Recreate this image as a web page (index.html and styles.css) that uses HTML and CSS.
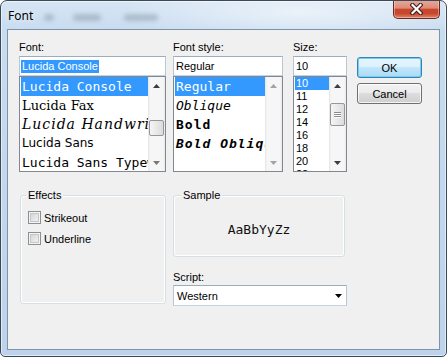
FILE: index.html
```html
<!DOCTYPE html>
<html lang="en">
<head>
  <meta charset="UTF-8">
  <title>Font</title>
  <link rel="stylesheet" href="styles.css">
</head>
<body>
  <div class="window">
    <div class="titlebar">
      <span class="title">Font</span>
      <span class="haze haze-1"></span>
      <span class="haze haze-2"></span>
      <span class="haze haze-3"></span>
      <button class="close-btn" aria-label="Close">
        <svg width="13" height="12" viewBox="0 0 13 12">
          <path d="M2.5 2 10.5 10M10.5 2 2.5 10" stroke="#3a1c15" stroke-width="4.2" stroke-linecap="square"/>
          <path d="M2.5 2 10.5 10M10.5 2 2.5 10" stroke="#fff" stroke-width="2.2" stroke-linecap="square"/>
        </svg>
      </button>
    </div>

    <div class="client">
      <div class="top">
        <div class="col-font">
          <label class="lbl">Font:</label>
          <div class="textbox"><span class="sel-text">Lucida Console</span></div>
          <div class="listbox">
            <ul class="items">
              <li class="selected f-console">Lucida Console</li>
              <li class="f-fax">Lucida Fax</li>
              <li class="f-hand">Lucida Handwriting</li>
              <li class="f-sans">Lucida Sans</li>
              <li class="f-console">Lucida Sans Typewriter</li>
            </ul>
            <div class="scrollbar">
              <span class="sb-btn"><svg width="7" height="4" viewBox="0 0 7 4"><path d="M0 4 3.5 0 7 4Z" fill="#3c3c3c"/></svg></span>
              <span class="sb-track"><span class="thumb" style="margin-top:26px;height:16px"></span></span>
              <span class="sb-btn"><svg width="7" height="4" viewBox="0 0 7 4"><path d="M0 0 3.5 4 7 0Z" fill="#777"/></svg></span>
            </div>
          </div>
        </div>

        <div class="col-style">
          <label class="lbl">Font style:</label>
          <div class="textbox">Regular</div>
          <div class="listbox">
            <ul class="items mono">
              <li class="selected">Regular</li>
              <li class="oblique">Oblique</li>
              <li class="bold">Bold</li>
              <li class="bold oblique">Bold Oblique</li>
            </ul>
            <div class="scrollbar">
              <span class="sb-btn"><svg width="7" height="4" viewBox="0 0 7 4"><path d="M0 4 3.5 0 7 4Z" fill="#a3a3a3"/></svg></span>
              <span class="sb-track"></span>
              <span class="sb-btn"><svg width="7" height="4" viewBox="0 0 7 4"><path d="M0 0 3.5 4 7 0Z" fill="#a3a3a3"/></svg></span>
            </div>
          </div>
        </div>

        <div class="col-size">
          <label class="lbl">Size:</label>
          <div class="textbox">10</div>
          <div class="listbox size-list">
            <ul class="items">
              <li class="selected">10</li>
              <li>11</li>
              <li>12</li>
              <li>14</li>
              <li>16</li>
              <li>18</li>
              <li>20</li>
              <li>22</li>
            </ul>
            <div class="scrollbar">
              <span class="sb-btn"><svg width="7" height="4" viewBox="0 0 7 4"><path d="M0 4 3.5 0 7 4Z" fill="#3c3c3c"/></svg></span>
              <span class="sb-track">
                <span class="thumb" style="margin-top:9px;height:23px">
                  <span class="grip"></span><span class="grip"></span><span class="grip"></span>
                </span>
              </span>
              <span class="sb-btn"><svg width="7" height="4" viewBox="0 0 7 4"><path d="M0 0 3.5 4 7 0Z" fill="#3c3c3c"/></svg></span>
            </div>
          </div>
        </div>

        <div class="buttons">
          <button class="btn btn-default">OK</button>
          <button class="btn">Cancel</button>
        </div>
      </div>

      <div class="bottom">
        <fieldset class="group group-effects">
          <legend>Effects</legend>
          <label class="check"><span class="box"></span>Strikeout</label>
          <label class="check"><span class="box"></span>Underline</label>
        </fieldset>

        <div class="col-sample">
          <fieldset class="group group-sample">
            <legend>Sample</legend>
            <div class="sample-text">AaBbYyZz</div>
          </fieldset>
          <label class="lbl">Script:</label>
          <div class="combo">
            <span>Western</span>
            <svg width="7" height="4" viewBox="0 0 7 4"><path d="M0 0 3.5 4 7 0Z" fill="#000"/></svg>
          </div>
        </div>
      </div>
    </div>
  </div>
</body>
</html>
```

FILE: styles.css
```css
* {
  box-sizing: border-box;
}
body {
  margin: 0;
  background: #fff;
  font-family: "Liberation Sans", Arial, sans-serif;
  font-size: 11px;
  color: #000;
}
.window {
  width: 447px;
  height: 357px;
  display: flex;
  flex-direction: column;
  padding: 0 6px 6px;
  border: 1px solid #3b4858;
  border-radius: 7px 7px 5px 5px;
  background:
    radial-gradient(ellipse 180px 30px at 300px 12px, rgba(255, 255, 255, 0.55), rgba(255, 255, 255, 0)),
    linear-gradient(to bottom, #d6e5f4 0, #c8dcf0 30px, #bcd3eb 100%);
  box-shadow: inset 0 0 0 1px rgba(255, 255, 255, 0.55);
  overflow: hidden;
}

/* title bar */
.titlebar {
  height: 28px;
  display: flex;
  align-items: center;
  padding-left: 1px;
}
.title {
  font-family: "Noto Sans", "Open Sans", sans-serif;
  font-size: 12px;
  text-shadow: 0 0 6px #fff;
}
.haze {
  height: 7px;
  margin-top: 4px;
  border-radius: 4px;
  background: rgba(110, 122, 136, 0.35);
  filter: blur(2px);
}
.haze-1 {
  width: 10px;
  margin-left: 11px;
}
.haze-2 {
  width: 28px;
  margin-left: 19px;
}
.haze-3 {
  width: 34px;
  margin-left: 23px;
}
.close-btn {
  margin-left: auto;
  align-self: flex-start;
  margin-top: -1px;
  width: 47px;
  height: 19px;
  padding: 0;
  border: 1px solid #6b2a20;
  border-top: none;
  border-radius: 0 0 5px 5px;
  background: linear-gradient(#e8aa9b 0, #dc8b77 45%, #c8462d 52%, #c9472d 75%, #de8568 100%);
  box-shadow: inset 0 0 0 1px rgba(255, 255, 255, 0.35);
  display: flex;
  align-items: center;
  justify-content: center;
}

/* client area */
.client {
  flex: 1;
  background: #f0f0f0;
  border: 1px solid #7f93a8;
  padding: 11px 0 0 11px;
}
.top {
  display: flex;
  align-items: flex-start;
}
.col-font {
  width: 147px;
}
.col-style {
  width: 110px;
  margin-left: 7px;
}
.col-size {
  width: 54px;
  margin-left: 10px;
}
.lbl {
  display: block;
  line-height: 13px;
  margin-bottom: 2px;
}
.textbox {
  height: 20px;
  line-height: 18px;
  padding-left: 2px;
  background: #fff;
  border: 1px solid;
  border-color: #9aacbf #b9c8d6 #c5d2de #b9c8d6;
  white-space: nowrap;
}
.sel-text {
  display: inline-block;
  line-height: 13px;
  padding: 0 1px;
  margin-left: -1px;
  background: #3399ff;
  color: #fff;
}

/* list boxes */
.listbox {
  height: 96px;
  display: flex;
  border: 1px solid #828790;
  background: #fff;
}
.items {
  flex: 1;
  min-width: 0;
  list-style: none;
  margin: 0;
  padding: 0 0 0 1px;
  overflow: hidden;
}
.items li {
  height: 19px;
  line-height: 19px;
  padding-left: 1px;
  white-space: nowrap;
  overflow: hidden;
}
.size-list .items li {
  height: 13px;
  line-height: 13px;
}
.items .selected {
  background: #3399ff;
  color: #fff;
}
.f-console,
.mono {
  font-family: "DejaVu Sans Mono", "Liberation Mono", monospace;
  font-size: 13px;
}
.f-fax {
  font-family: "DejaVu Serif", serif;
  font-size: 13px;
}
.f-hand {
  font-family: "DejaVu Serif", serif;
  font-style: italic;
  font-size: 14px;
  letter-spacing: 1px;
}
.f-sans {
  font-family: "DejaVu Sans", sans-serif;
  font-size: 12px;
}
.oblique {
  font-style: italic;
}
.bold {
  font-weight: bold;
  letter-spacing: 1px;
}

/* scrollbars */
.scrollbar {
  width: 17px;
  display: flex;
  flex-direction: column;
  background: linear-gradient(to right, #e4e4e4, #f6f6f6 2px, #f6f6f6 15px, #e8e8e8);
}
.sb-btn {
  height: 17px;
  display: flex;
  align-items: center;
  justify-content: center;
}
.sb-track {
  flex: 1;
}
.thumb {
  margin-left: 1px;
  margin-right: 1px;
  border: 1px solid #979797;
  border-radius: 2px;
  background: linear-gradient(to right, #f5f5f5, #dcdcdc);
  display: flex;
  flex-direction: column;
  align-items: center;
  justify-content: center;
  gap: 1px;
}
.grip {
  width: 7px;
  height: 1px;
  background: #8c8c8c;
  box-shadow: 0 1px #fff;
}

/* buttons */
.buttons {
  width: 65px;
  margin-left: 10px;
  margin-top: 16px;
  display: flex;
  flex-direction: column;
  gap: 5px;
}
.btn {
  height: 21px;
  padding: 0;
  font-family: "Liberation Sans", Arial, sans-serif;
  font-size: 11px;
  color: #000;
  border: 1px solid #707070;
  border-radius: 3px;
  background: linear-gradient(#f2f2f2 0, #ebebeb 50%, #dddddd 50%, #cfcfcf 100%);
  box-shadow: inset 0 0 0 1px rgba(255, 255, 255, 0.75);
}
.btn-default {
  border-color: #3c7fb1;
  background: linear-gradient(#e7f5fd 0, #dbf1fc 50%, #c1e7fc 50%, #abdaf3 100%);
  box-shadow: inset 0 0 0 1px #6fd0f6;
}

/* bottom part */
.bottom {
  display: flex;
  align-items: flex-start;
  margin-top: 17px;
}
.group {
  margin: 0;
  min-inline-size: 0;
  border: 1px solid #d5dfe5;
  border-radius: 3px;
  box-shadow: inset 0 0 0 1px #fff;
}
.group legend {
  padding: 0 2px;
  margin-left: -2px;
  line-height: 13px;
  background: #f0f0f0;
}
.group-effects {
  width: 146px;
  margin-left: 1px;
  padding: 9px 7px 58px;
}
.check {
  display: flex;
  align-items: center;
  gap: 3px;
  height: 13px;
}
.check + .check {
  margin-top: 8px;
}
.box {
  width: 13px;
  height: 13px;
  border: 1px solid #8e8f8f;
  background: linear-gradient(135deg, #cdd0d4, #f7f7f7);
  box-shadow: inset 0 0 0 1px #f4f4f4, inset 0 0 0 2px #c4c7cb;
}
.col-sample {
  width: 174px;
  margin-left: 7px;
}
.group-sample {
  width: 172px;
  padding: 20px 9px 19px;
}
.sample-text {
  text-align: center;
  font-family: "DejaVu Sans Mono", "Liberation Mono", monospace;
  font-size: 13px;
  line-height: 15px;
  color: #111;
}
.col-sample .lbl {
  margin-top: 14px;
  margin-bottom: 1px;
}
.combo {
  height: 21px;
  display: flex;
  align-items: center;
  justify-content: space-between;
  padding: 0 4px 0 3px;
  background: #fff;
  border: 1px solid;
  border-color: #9aacbf #b9c8d6 #c5d2de #b9c8d6;
}
```
